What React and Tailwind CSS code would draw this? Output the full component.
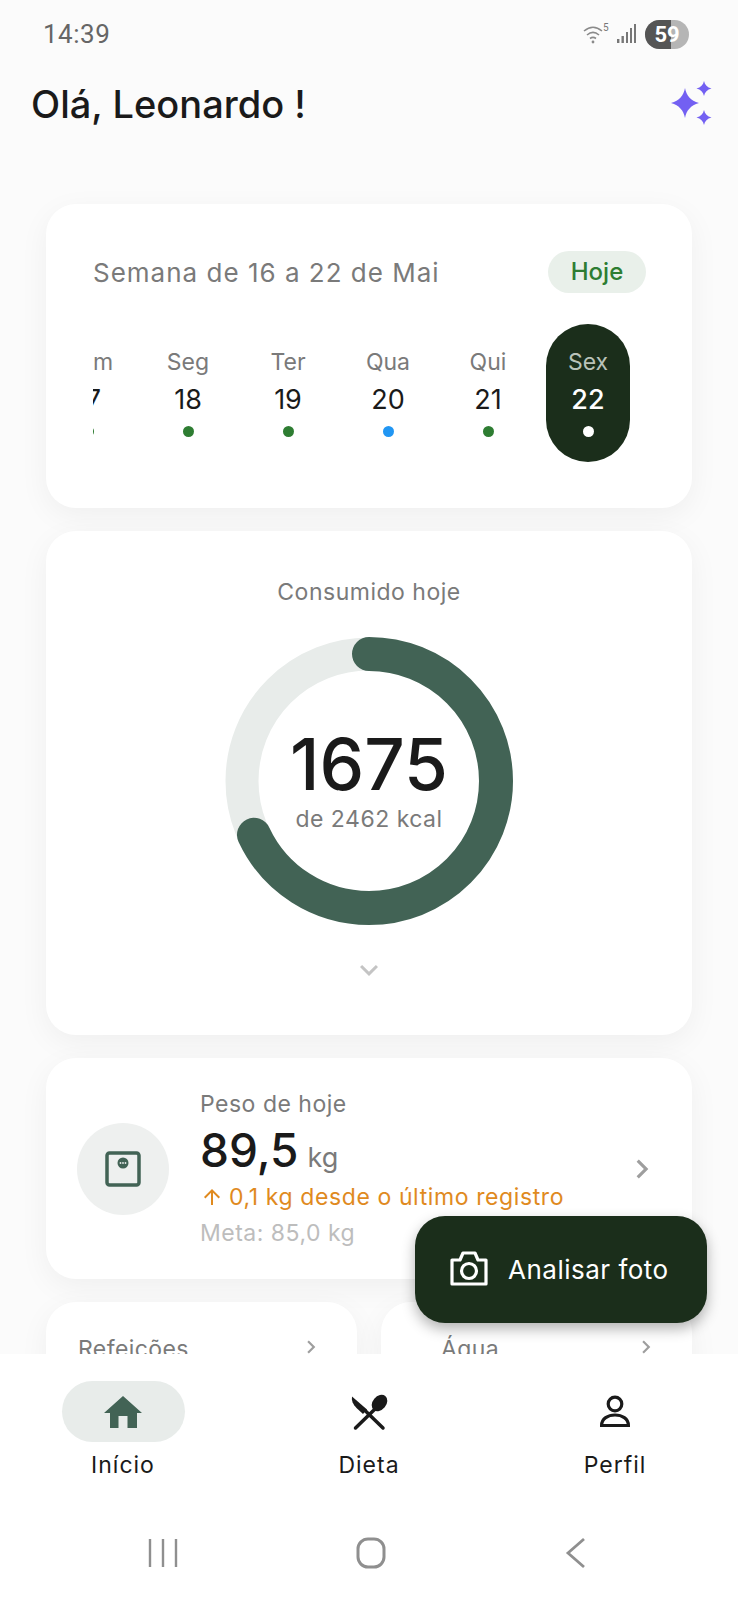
import React from "react";
import { MdArrowUpward, MdChevronRight, MdKeyboardArrowDown } from "react-icons/md";

const days = [
    { name: "Dom", num: "17", dot: "bg-[#2e7d32]" },
    { name: "Seg", num: "18", dot: "bg-[#2e7d32]" },
    { name: "Ter", num: "19", dot: "bg-[#2e7d32]" },
    { name: "Qua", num: "20", dot: "bg-[#2196f3]" },
    { name: "Qui", num: "21", dot: "bg-[#2e7d32]" },
];

function StatusBar() {
    return (
        <div className="flex items-center justify-between h-[68px] pl-[43px] pr-[49px] shrink-0">
            <span className="text-[26px] tracking-[0.5px] text-[#666] font-['Roboto',sans-serif]">14:39</span>
            <div className="flex items-center gap-[8px]">
                <svg width="26" height="24" viewBox="0 0 26 24" fill="none" stroke="#8a8a8a" strokeWidth="1.6">
                    <path d="M1 9c6-5 12-5 18 0M4 13c4-3.500 8-3.500 12 0M7 16.500c2-1.500 4-1.500 6 0" />
                    <circle cx="10" cy="20" r="1.400" fill="#8a8a8a" stroke="none" />
                    <text x="20" y="9" fontSize="10" fill="#777" stroke="none" fontFamily="Roboto">5</text>
                </svg>
                <svg width="20" height="20" viewBox="0 0 20 20" fill="#777">
                    <rect x="0" y="15" width="2.400" height="4" />
                    <rect x="4.500" y="12" width="2.400" height="7" />
                    <rect x="9" y="8" width="2" height="11" />
                    <rect x="13" y="4" width="2" height="15" />
                    <rect x="17" y="0" width="2" height="19" />
                </svg>
                <div className="w-[44px] h-[29px] rounded-full overflow-hidden relative bg-[#b5b5b5]">
                    <div className="h-full w-[26px] bg-[#555]" />
                    <span className="absolute inset-0 flex items-center justify-center text-[22px] font-bold text-white font-['Roboto',sans-serif]">59</span>
                </div>
            </div>
        </div>
    );
}

function Sparkles() {
    return (
        <svg width="42" height="46" viewBox="0 0 42 46" fill="#7360f2">
            <path d="M14 7c1.500 7.500 5.500 12.500 14 15-8.500 2.500-12.500 7.500-14 15-1.500-7.500-5.500-12.500-14-15 8.500-2.500 12.500-7.500 14-15z" />
            <path d="M33 0c.9 4 3.200 6.300 7.500 7.500-4.300 1.200-6.600 3.500-7.500 7.500-.9-4-3.200-6.300-7.500-7.500 4.300-1.200 6.600-3.500 7.500-7.500z" />
            <path d="M33 29c.9 4 3.200 6.300 7.500 7.500-4.300 1.200-6.600 3.500-7.500 7.500-.9-4-3.200-6.300-7.500-7.500 4.300-1.200 6.600-3.500 7.500-7.500z" />
        </svg>
    );
}

function WeekCard() {
    return (
        <section className="bg-white rounded-[30px] h-[304px] shrink-0 shadow-[0_8px_30px_rgba(0,0,0,0.05)] pl-[47px] pr-[46px] pt-[47px]">
            <div className="flex items-center justify-between">
                <span className="text-[26px] tracking-[1px] text-[#7a7a7a]">Semana de 16 a 22 de Mai</span>
                <span className="w-[98px] h-[42px] rounded-full bg-[#e9f0ea] flex items-center justify-center text-[24px] font-medium text-[#2e7d32]">Hoje</span>
            </div>
            <div className="flex items-start justify-end mt-[31px] overflow-hidden h-[138px]">
                {days.map((d) => (
                    <div key={d.num} className="w-[100px] shrink-0 h-[138px] flex flex-col items-center pt-[24px]">
                        <span className="text-[23px] leading-[28px] text-[#7a7a7a]">{d.name}</span>
                        <span className="text-[27px] leading-[36px] mt-[6px] text-[#1a1a1a]">{d.num}</span>
                        <span className={"w-[11px] h-[11px] rounded-full mt-[8px] " + d.dot} />
                    </div>
                ))}
                <div className="w-[84px] shrink-0 h-[138px] ml-[8px] mr-[16px] rounded-full bg-[#1b2e1b] flex flex-col items-center pt-[24px]">
                    <span className="text-[23px] leading-[28px] text-[#b9c2b9]">Sex</span>
                    <span className="text-[27px] leading-[36px] mt-[6px] font-medium text-white">22</span>
                    <span className="w-[11px] h-[11px] rounded-full mt-[8px] bg-white" />
                </div>
            </div>
        </section>
    );
}

function CalorieRing() {
    const r = 127;
    const c = 2 * Math.PI * r;
    return (
        <div className="relative w-[292px] h-[292px] mt-[28px]">
            <svg width="292" height="292" viewBox="0 0 292 292" className="-rotate-90">
                <circle cx="146" cy="146" r={r} fill="none" stroke="#e8ecea" strokeWidth="33" />
                <circle cx="146" cy="146" r={r} fill="none" stroke="#426355" strokeWidth="34" strokeLinecap="round" strokeDasharray={`${c * 0.68} ${c}`} />
            </svg>
            <div className="absolute inset-0 flex flex-col items-center justify-center pb-[5px]">
                <span className="text-[71px] leading-[80px] font-medium text-[#1a1a1a]">1675</span>
                <span className="text-[23px] leading-[30px] tracking-[0.5px] text-[#7a7a7a]">de 2462 kcal</span>
            </div>
        </div>
    );
}

function ConsumedCard() {
    return (
        <section className="bg-white rounded-[30px] h-[504px] shrink-0 shadow-[0_8px_30px_rgba(0,0,0,0.05)] flex flex-col items-center pt-[46px]">
            <span className="text-[23px] leading-[30px] tracking-[0.5px] text-[#7a7a7a]">Consumido hoje</span>
            <CalorieRing />
            <MdKeyboardArrowDown className="text-[#c4c4c4] mt-[25px]" size={36} />
        </section>
    );
}

function ScaleIcon() {
    return (
        <svg width="36" height="36" viewBox="0 0 36 36" fill="none">
            <rect x="2" y="2" width="32" height="32" rx="2.500" stroke="#426355" strokeWidth="3.500" />
            <circle cx="18" cy="12" r="5.500" fill="#426355" />
            <circle cx="15.500" cy="12" r="0.900" fill="#e8ecea" />
            <circle cx="18" cy="12" r="0.900" fill="#e8ecea" />
            <circle cx="20.500" cy="12" r="0.900" fill="#e8ecea" />
        </svg>
    );
}

function WeightCard() {
    return (
        <section className="bg-white rounded-[30px] h-[221px] shrink-0 shadow-[0_8px_30px_rgba(0,0,0,0.05)] flex items-center pl-[31px] pr-[31px]">
            <div className="w-[92px] h-[92px] rounded-full bg-[#eef0ef] flex items-center justify-center shrink-0">
                <ScaleIcon />
            </div>
            <div className="flex-1 ml-[31px] flex flex-col">
                <span className="text-[23px] leading-[30px] tracking-[0.5px] text-[#7a7a7a]">Peso de hoje</span>
                <div className="flex items-baseline gap-[9px] leading-[52px] mt-[5px]">
                    <span className="text-[46px] font-medium text-[#1a1a1a]">89,5</span>
                    <span className="text-[27px] text-[#7a7a7a]">kg</span>
                </div>
                <div className="flex items-center -mt-[2px] text-[#e08a1e]">
                    <MdArrowUpward size={24} />
                    <span className="text-[23px] leading-[30px] tracking-[0.6px] ml-[5px]">0,1 kg desde o último registro</span>
                </div>
                <span className="text-[23px] leading-[30px] tracking-[0.5px] text-[#bdbdbd] mt-[6px]">Meta: 85,0 kg</span>
            </div>
            <MdChevronRight className="text-[#9e9e9e]" size={38} />
        </section>
    );
}

function SmallCard({ title, inset }) {
    return (
        <section className={"bg-white rounded-[30px] h-[160px] shadow-[0_8px_30px_rgba(0,0,0,0.05)] pr-[33px] pt-[32px] flex items-start justify-between " + inset}>
            <span className="text-[23px] leading-[30px] tracking-[0.4px] text-[#7a7a7a]">{title}</span>
            <MdChevronRight className="text-[#9e9e9e]" size={26} />
        </section>
    );
}

function HomeIcon() {
    return (
        <svg width="38" height="32" viewBox="4 14 38 32" fill="#426355">
            <path d="M23 14L42 31H37V46H27.500V34H18.500V46H10V31H4Z" />
        </svg>
    );
}

function DietIcon() {
    return (
        <svg width="38" height="38" viewBox="20 12 38 38" fill="#1a1a1a">
            <path d="M22 15.500c-.8 4 1 8 4.500 11.500l6.500 6 4-4.500z" />
            <ellipse cx="49.500" cy="22" rx="6.800" ry="9" transform="rotate(40 49.500 22)" />
            <path d="M44 29L25.500 47M35 29.500L53 47" fill="none" stroke="#1a1a1a" strokeWidth="3.500" strokeLinecap="round" />
        </svg>
    );
}

function PersonIcon() {
    return (
        <svg width="32" height="34" viewBox="19 15 32 34" fill="none" stroke="#1a1a1a" strokeWidth="3.200">
            <circle cx="35" cy="24" r="6.800" />
            <path d="M21.600 45.500C21.600 38.500 28 35 35 35s13.400 3.500 13.400 10.500z" />
        </svg>
    );
}

function CameraIcon() {
    return (
        <svg width="38" height="35" viewBox="0 0 38 35" fill="none" stroke="#fff" strokeWidth="3.200" strokeLinejoin="round" className="-mt-[2px]">
            <path d="M2 9h8l3-7h12l3 7h8v24H2z" />
            <circle cx="19" cy="20" r="7.500" />
        </svg>
    );
}

function BottomNav() {
    return (
        <nav className="bg-white h-[246px] shrink-0 flex flex-col relative">
            <div className="flex h-[157px] pt-[27px]">
                <div className="flex-1 flex flex-col items-center">
                    <div className="w-[123px] h-[61px] rounded-full bg-[#e8ecea] flex items-center justify-center">
                        <HomeIcon />
                    </div>
                    <span className="text-[23px] leading-[30px] tracking-[1px] mt-[8px] text-[#1a1a1a]">Início</span>
                </div>
                <div className="flex-1 flex flex-col items-center">
                    <div className="h-[61px] flex items-center justify-center"><DietIcon /></div>
                    <span className="text-[23px] leading-[30px] tracking-[1px] mt-[8px] text-[#1a1a1a]">Dieta</span>
                </div>
                <div className="flex-1 flex flex-col items-center">
                    <div className="h-[61px] flex items-center justify-center"><PersonIcon /></div>
                    <span className="text-[23px] leading-[30px] tracking-[1px] mt-[8px] text-[#1a1a1a]">Perfil</span>
                </div>
            </div>
            <div className="flex items-center justify-between pl-[148px] pr-[150px] mt-[26px]">
                <svg width="30" height="30" viewBox="0 0 30 30" stroke="#8f8f8f" strokeWidth="2.400" fill="none">
                    <path d="M2 1v28M15 1v28M28 1v28" />
                </svg>
                <svg width="30" height="32" viewBox="0 0 30 32" stroke="#8f8f8f" strokeWidth="3" fill="none">
                    <rect x="2" y="2" width="26" height="28" rx="10" />
                </svg>
                <svg width="24" height="32" viewBox="0 0 24 32" stroke="#8f8f8f" strokeWidth="2.800" fill="none">
                    <path d="M20 2L4 16l16 14" />
                </svg>
            </div>
        </nav>
    );
}

export default function App() {
    return (
        <div className="relative h-[1600px] w-[738px] overflow-hidden bg-[#fbfbfb] flex flex-col font-['Inter',sans-serif]">
            <StatusBar />
            <header className="flex items-center justify-between pl-[31px] pr-[25px] h-[72px] shrink-0">
                <h1 className="text-[38px] font-medium text-[#1a1a1a]">Olá, Leonardo !</h1>
                <Sparkles />
            </header>
            <main className="flex-1 overflow-hidden px-[46px] pt-[64px] flex flex-col gap-[23px]">
                <WeekCard />
                <ConsumedCard />
                <WeightCard />
                <div className="grid grid-cols-2 gap-[24px] shrink-0">
                    <SmallCard title="Refeições" inset="pl-[32px]" />
                    <SmallCard title="Água" inset="pl-[60px]" />
                </div>
            </main>
            <BottomNav />
            <button className="absolute left-[415px] top-[1216px] w-[292px] h-[107px] rounded-[30px] bg-[#1b2e1b] shadow-[0_6px_14px_rgba(0,0,0,0.3)] flex items-center pl-[35px] text-white">
                <CameraIcon />
                <span className="text-[26px] tracking-[0.5px] ml-[20px]">Analisar foto</span>
            </button>
        </div>
    );
}
